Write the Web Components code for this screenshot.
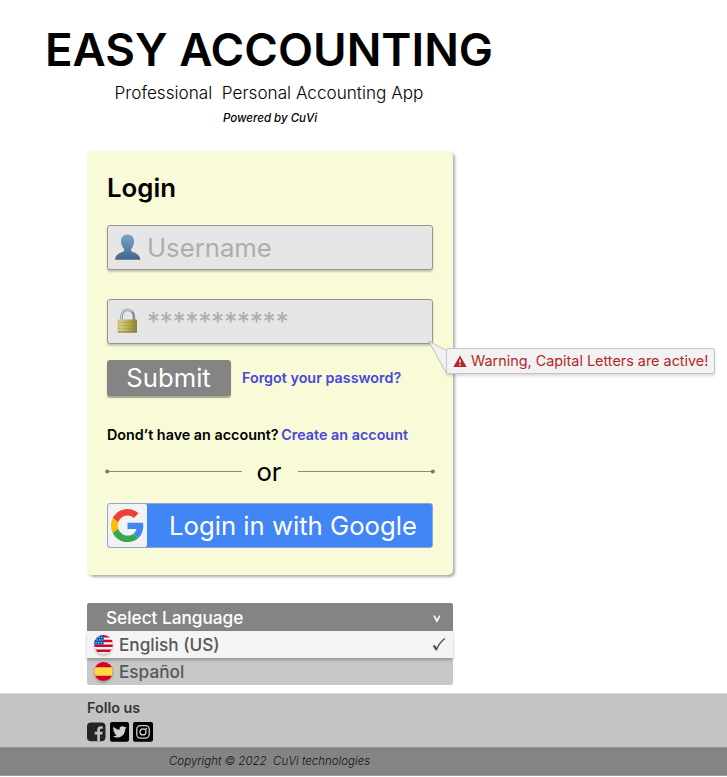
<!DOCTYPE html>
<html lang="en">
<head>
<meta charset="utf-8">
<title>Easy Accounting</title>
<style>
body{margin:0;background:#fff;color:#000;font-family:Inter,"Liberation Sans",sans-serif;overflow:hidden}
</style>
</head>
<body>
<ea-page></ea-page>
<script>
const define = (name, html) => customElements.define(name, class extends HTMLElement {
  constructor() {
    super();
    this.attachShadow({mode: 'open'}).innerHTML = '<style>*{box-sizing:border-box}:host{box-sizing:border-box}span{white-space:pre}</style>' + html;
  }
});

define('ea-header', `
<style>
:host{display:flex;flex-direction:column;align-items:center;width:538px;height:151px;padding-top:22px}
.t{font-size:45.700px;line-height:56px;font-weight:600}
.s{font-size:17.150px;line-height:22px;font-weight:300;margin-top:4px}
.p{font-size:11.500px;line-height:16px;font-weight:500;font-style:italic;margin:6px 0 0 2px}
</style><span class="t"><slot name="title"></slot></span><span class="s"><slot name="sub"></slot></span><span class="p"><slot name="by"></slot></span>`);

define('ea-field', `
<style>
:host{display:flex;align-items:center;width:326px;height:45px;background:#e6e6e6;border:1px solid #939393;border-radius:3px;box-shadow:0 2px 2px rgba(0,0,0,.2);padding-left:6px;color:#adadad;font-size:25.700px;line-height:32px}
</style><slot></slot>`);

define('ea-user-icon', `
<style>:host{display:block;flex:none;width:28px;height:30px;margin-right:5px}svg{display:block}</style>
<svg width="28" height="30" viewBox="0 0 28 30"><defs><linearGradient id="person" x1="0" y1="0" x2="0" y2="1"><stop offset="0" stop-color="#78a7c9"/><stop offset="1" stop-color="#42658a"/></linearGradient></defs>
<path fill="url(#person)" d="M13.500 1.500C17.700 1.500 20 4.300 20 8.200C20 10.800 19.100 13.600 17.500 15.400C16.700 16.400 16.800 18 18 18.600C20.400 19.900 25.900 20.800 26.300 26.800H1C1.400 20.800 6.900 19.900 9.200 18.600C10.400 18 10.500 16.400 9.700 15.400C8 13.600 7 10.800 7 8.200C7 4.300 9.300 1.500 13.500 1.500z"/></svg>`);

define('ea-lock-icon', `
<style>:host{display:block;flex:none;width:28px;height:30px;margin-right:5px}svg{display:block}</style>
<svg width="28" height="30" viewBox="0 0 28 30"><defs><linearGradient id="brass"><stop offset="0" stop-color="#c9bf69"/><stop offset=".15" stop-color="#d6cd82"/><stop offset=".6" stop-color="#b2a650"/><stop offset="1" stop-color="#8c813b"/></linearGradient></defs>
<path d="M7.500 14V9.500A6.200 6.800 0 0 1 19.900 9.500V14" fill="none" stroke="#81909b" stroke-width="2.600"/><path d="M7.300 14V9.500A6.400 6.800 0 0 1 18.300 4.700" fill="none" stroke="#b9d3e8" stroke-width="1.500"/>
<rect x="3.700" y="12.500" width="19.300" height="13" rx="1" fill="url(#brass)"/><path d="M4 15.500h19M4 18.500h19M4 21.500h19" stroke="#84783a" stroke-opacity=".22"/><path d="M4 25h19" stroke="#83793a"/></svg>`);

define('ea-button', `
<style>:host{display:flex;align-items:center;justify-content:center;width:124px;height:36px;background:#848484;border-radius:3px;color:#fff;font-size:25.700px;line-height:32px;padding-right:1px;box-shadow:0 2px 1px #aaa993}</style><slot></slot>`);

define('ea-link', `<style>:host{color:#4747dc;font-weight:600}</style><slot></slot>`);

define('ea-divider', `
<style>:host{display:flex;align-items:center;justify-content:space-between;width:330px;height:32px;margin-left:-2px;font-size:25.700px;line-height:32px}
svg{display:block}.m{margin-right:2px;padding-top:1px}</style>
<svg width="138" height="5"><path d="M2 2.500h135" stroke="#8c8b77"/><circle cx="2.200" cy="2.500" r="2" fill="#78776a"/></svg><span class="m"><slot></slot></span><svg width="138" height="5"><path d="M1 2.500h135" stroke="#8c8b77"/><circle cx="135.800" cy="2.500" r="2" fill="#78776a"/></svg>`);

define('ea-google', `
<style>:host{display:flex;align-items:center;width:326px;height:45px;background:#4285f4;border:1px solid #8ba6d7;border-radius:3px;color:#fff;font-size:25.700px;line-height:32px}
.b{width:39px;height:43px;background:#f2f2f2;border-radius:2px;margin-right:22px;display:flex;align-items:center;justify-content:center}</style>
<span class="b"><svg width="33" height="33" viewBox="0 0 48 48"><path fill="#EA4335" d="M24 9.500c3.540 0 6.710 1.220 9.210 3.600l6.850-6.850C35.900 2.380 30.470 0 24 0 14.620 0 6.510 5.380 2.560 13.220l7.980 6.190C12.430 13.720 17.740 9.500 24 9.500z"/><path fill="#4285F4" d="M46.980 24.550c0-1.570-.15-3.090-.38-4.550H24v9.020h12.940c-.58 2.960-2.260 5.480-4.780 7.180l7.730 6c4.510-4.180 7.090-10.360 7.090-17.650z"/><path fill="#FBBC05" d="M10.530 28.590A14.500 14.500 0 0 1 9.770 24c0-1.600.27-3.140.76-4.590l-7.980-6.190A23.900 23.900 0 0 0 0 24c0 3.880.92 7.540 2.560 10.780z"/><path fill="#34A853" d="M24 48c6.480 0 11.930-2.130 15.890-5.810l-7.730-6c-2.150 1.450-4.920 2.300-8.160 2.300-6.260 0-11.570-4.220-13.470-9.910l-7.980 6.190C6.510 42.620 14.620 48 24 48z"/></svg></span><slot></slot>`);

define('ea-tooltip', `
<style>:host{display:flex;align-items:center;width:269px;height:26px;background:#f2f2f2;border:1px solid #c4c4c4;border-radius:2px;box-shadow:0 2px 3px rgba(0,0,0,.15);color:#b3282d;font-size:14.400px;line-height:18px;padding-left:6px}
.tail{position:absolute;left:-20px;top:-10px}.w{margin-right:4px;flex:none}</style>
<svg class="tail" width="22" height="38"><path d="M19.500 11.500L1.500 2l17.500 31.500" fill="#f2f2f2" stroke="#bdbdbd"/><path d="M19.500 12v20" stroke="#c9c9c9"/></svg>
<svg class="w" width="14" height="13" viewBox="0 0 14 13"><path d="M7 .5L13.700 12H.3z" fill="#b3282d"/><path d="M7 4.500V8M7 9.200V10.700" stroke="#eee" stroke-width="1.400"/></svg><slot></slot>`);

define('ea-card', `
<style>:host{position:relative;display:flex;flex-direction:column;width:366px;height:424px;margin-left:87px;padding:21px 20px;background:#f9fad7;border-radius:5px;box-shadow:2px 2px 3px #adadad}
h1{margin:0 0 21px;font-size:25.800px;line-height:32px;font-weight:600}
ea-field+ea-field{margin-top:29px}
.row{display:flex;align-items:center;gap:11px;margin:16px 0 29px}
.fs,.q{font-size:14.350px;line-height:20px;font-weight:600}.q ea-link{margin-left:-1px}
ea-divider{margin-top:10px}ea-google{margin-top:16px}
ea-tooltip{position:absolute;left:359px;top:197px}</style>
<h1><span>Login</span></h1>
<ea-field><ea-user-icon></ea-user-icon><span>Username</span></ea-field>
<ea-field><ea-lock-icon></ea-lock-icon><span>***********</span></ea-field>
<div class="row"><ea-button><span>Submit</span></ea-button><ea-link class="fs">Forgot your password?</ea-link></div>
<div class="q"><span>Dond’t have an account?</span> <ea-link>Create an account</ea-link></div>
<ea-divider><span>or</span></ea-divider>
<ea-google><span>Login in with Google</span></ea-google>
<ea-tooltip><span>Warning, Capital Letters are active!</span></ea-tooltip>`);

define('ea-flag-us', `<style>:host{display:block}svg{display:block;filter:drop-shadow(0 2px 1px rgba(0,0,0,.2))}</style>
<svg width="19" height="19" viewBox="0 0 19 19"><defs><clipPath id="c"><circle cx="9.500" cy="9.500" r="9.400"/></clipPath></defs><g clip-path="url(#c)"><path fill="#f5f5f5" d="M0 0h19v19H0z"/><path d="M0 1.200h19M0 6h19M0 10.700h19M0 15.700h19" stroke="#d80027" stroke-width="2.500"/><path fill="#0052b4" d="M0 0h9.700v9.500H0z"/><path d="M1.500 7.800h8M2.500 5h7M4.500 2.300h5" stroke="#e5edf7" stroke-width="1.100" stroke-dasharray="1.300 1.200"/></g></svg>`);
define('ea-flag-es', `<style>:host{display:block}svg{display:block;filter:drop-shadow(0 2px 1px rgba(0,0,0,.2))}</style>
<svg width="19" height="19" viewBox="0 0 19 19"><defs><clipPath id="c"><circle cx="9.500" cy="9.500" r="9.400"/></clipPath></defs><g clip-path="url(#c)"><path fill="#d80027" d="M0 0h19v19H0z"/><path fill="#ffda44" d="M0 5.300h19v8.400H0z"/></g></svg>`);

define('ea-languages', `
<style>:host{display:block;width:366px;height:82px;margin:28px 0 0 87px;font-size:17.200px;font-weight:480;color:#575757}
div{display:flex;align-items:center;height:27px}svg{display:block}
.h{height:28px;background:#848484;color:#fff;padding:1px 11px 0 19px;justify-content:space-between;border-radius:2px 2px 0 0}
.o{padding:0 7px 1px;gap:6px;background:#c8c8c8}.on{background:#f4f4f4;position:relative;box-shadow:0 2px 3px rgba(0,0,0,.25)}.on svg{margin-left:auto}.es{border-radius:0 0 2px 2px}</style>
<div class="h"><span>Select Language</span><svg width="10" height="10" viewBox="0 0 10 10"><path d="M2 2.700L4.900 8L7.800 2.700" fill="none" stroke="#fff" stroke-width="1.600"/></svg></div>
<div class="o on"><ea-flag-us></ea-flag-us><span>English (US)</span><svg width="14" height="15" viewBox="0 0 14 15"><path d="M1.800 8.500L4.500 12.500C6.200 8.500 9 4.400 12.800 1.500" fill="none" stroke="#505050" stroke-width="1.500"/><path d="M1.800 8.500L4.300 12.500" stroke="#505050" stroke-width="2.300"/></svg></div>
<div class="o es"><ea-flag-es></ea-flag-es><span>Español</span></div>`);

define('ea-footer', `
<style>:host{display:block;width:727px;height:83px;margin-top:8px;border-top:1px solid #dcdcdc}
.a{height:53px;background:#c4c4c4;padding:5px 0 0 87px;font-size:14.350px;line-height:18px;font-weight:600;color:#353535}
.i{display:flex;gap:4px;margin-top:5px}svg{display:block}
.c{height:29px;background:#848484;border-top:1px solid #969696;border-bottom:1px solid #999;padding-left:169px;font-size:11.500px;line-height:26px;font-weight:300;font-style:italic;color:#111}</style>
<div class="a"><span>Follo us</span><div class="i">
<svg width="19" height="20" viewBox="0 0 19 20"><rect y=".5" width="18.500" height="18.700" rx="4" fill="#252525"/><path d="M10.300 19.200V12.500H7.700V9.700h2.600V7.800c0-2.500 1.400-3.600 3.500-3.600h1.900v2.600h-1.500c-1 0-1.300.5-1.300 1.300v1.600h2.800l-.5 2.800h-2.300v6.700z" fill="#c4c4c4"/></svg>
<svg width="19" height="20" viewBox="0 0 19 20"><rect width="19" height="19.800" rx="2" fill="#000"/><path transform="translate(2.700 2.900) scale(.58)" fill="#d0d0d0" d="M23.950 4.570a10 10 0 0 1-2.820.77 4.950 4.950 0 0 0 2.160-2.720c-.95.550-2 .95-3.130 1.180a4.920 4.920 0 0 0-8.380 4.480C7.690 8.090 4.070 6.130 1.640 3.160a4.920 4.920 0 0 0 1.520 6.570 4.900 4.900 0 0 1-2.230-.61v.06a4.920 4.920 0 0 0 3.950 4.830 5 5 0 0 1-2.210.08 4.940 4.940 0 0 0 4.600 3.420A9.870 9.870 0 0 1 0 19.540a14 14 0 0 0 7.550 2.210c9.050 0 14-7.500 14-13.980v-.64a9.940 9.940 0 0 0 2.460-2.550z"/></svg>
<svg width="20" height="20" viewBox="0 0 20 20"><rect width="20" height="19.800" rx="2" fill="#000"/><rect x="3.800" y="3.700" width="12.400" height="12.400" rx="3.500" fill="none" stroke="#d0d0d0" stroke-width="1.300"/><circle cx="10" cy="9.900" r="3" fill="none" stroke="#d0d0d0" stroke-width="1.300"/><circle cx="13.300" cy="6.600" r=".9" fill="#d0d0d0"/></svg></div></div>
<div class="c"><span>Copyright © 2022  CuVi technologies</span></div>`);

define('ea-page', `<style>:host{display:block;width:727px;height:777px}</style>
<ea-header><span slot="title">EASY ACCOUNTING</span><span slot="sub">Professional  Personal Accounting App</span><span slot="by">Powered by CuVi</span></ea-header><ea-card></ea-card><ea-languages></ea-languages><ea-footer></ea-footer>`);
</script>
</body>
</html>
